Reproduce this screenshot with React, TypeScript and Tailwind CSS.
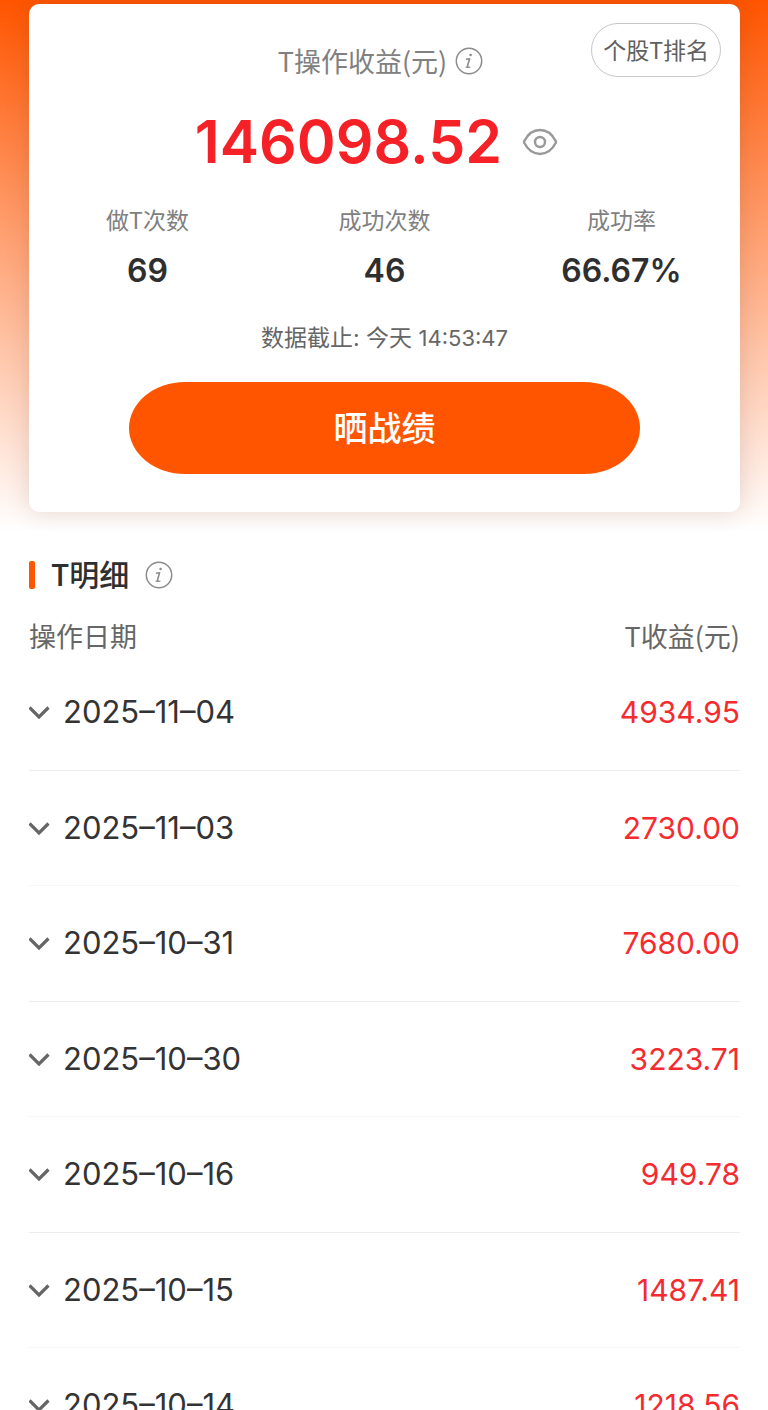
import React from 'react';
import { clsx } from 'clsx';

interface InfoButtonProps {
  label: string;
}

interface StatProps {
  label: string;
  value: string;
}

interface RecordRowProps {
  date: string;
  profit: string;
}

const stats: StatProps[] = [
  { label: '做T次数', value: '69' },
  { label: '成功次数', value: '46' },
  { label: '成功率', value: '66.67%' },
];

const records: RecordRowProps[] = [
  { date: '2025–11–04', profit: '4934.95' },
  { date: '2025–11–03', profit: '2730.00' },
  { date: '2025–10–31', profit: '7680.00' },
  { date: '2025–10–30', profit: '3223.71' },
  { date: '2025–10–16', profit: '949.78' },
  { date: '2025–10–15', profit: '1487.41' },
  { date: '2025–10–14', profit: '1218.56' },
];

const CJK = "font-['Noto_Sans_CJK_SC',sans-serif]";

const InfoButton = ({ label }: InfoButtonProps) => (
  <button type="button" aria-label={label} className="shrink-0 text-[#8c8c8c]">
    <svg viewBox="0 0 28 28" className="block size-7" fill="none" stroke="currentColor">
      <circle cx="14" cy="14" r="12.7" strokeWidth="1.5" />
      <circle cx="15.6" cy="8" r="1.3" fill="currentColor" stroke="none" />
      <path d="M11 12.2l3.6-.4-2.1 7.2c-.3 1 .2 1.4 1.1 1" strokeWidth="1.6" strokeLinejoin="round" />
      <path d="M10.6 20.2h4.8" strokeWidth="1.2" />
    </svg>
  </button>
);

const EyeIcon = () => (
  <svg viewBox="0 0 36 28" className="block h-7 w-9" fill="none" stroke="currentColor" strokeWidth="2.5">
    <path
      d="M2.2 13.2C5.8 6.2 11.4 2.1 18 2.1s12.2 4.1 15.8 11.1c.3.5.3 1.1 0 1.6C30.2 21.8 24.6 25.9 18 25.9S5.8 21.8 2.2 14.8c-.3-.5-.3-1.1 0-1.6Z"
      strokeLinejoin="round"
    />
    <circle cx="18" cy="14" r="5" />
  </svg>
);

const Chevron = () => (
  <svg viewBox="0 0 22 14" className="block h-[14px] w-[22px] text-[#666]" fill="none" stroke="currentColor">
    <path d="M.5 2.5 10 12l9.500-9.500" strokeWidth="3.2" />
  </svg>
);

const Stat = ({ label, value }: StatProps) => (
  <div className="flex flex-1 flex-col items-center gap-[18px]">
    <dt className="text-[23px] leading-8 text-[#808080]">{label}</dt>
    <dd className="font-[Inter,sans-serif] text-[32px] leading-9 font-semibold text-[#2f2f2f]">{value}</dd>
  </div>
);

const SummaryCard = () => (
  <section className="relative flex flex-col items-center rounded-[10px] bg-white pt-[39px] pb-[38px] shadow-[0_0_24px_rgba(90,40,20,0.16)]">
    <button
      type="button"
      className="absolute top-[19px] right-[19px] h-[54px] rounded-full border border-[#c8c8c8] px-[11px] pb-[2px] text-[23px] text-[#606060]"
    >
      个股T排名
    </button>

    <div className="mr-2 flex items-center gap-2">
      <h1 className="text-[27px] leading-9 text-[#808080]">T操作收益(元)</h1>
      <InfoButton label="T操作收益说明" />
    </div>

    <div className="mt-[29px] mr-4 flex items-center gap-5">
      <strong className="font-[Inter,sans-serif] text-[59px] leading-[68px] font-semibold text-[#f52126]">146098.52</strong>
      <button type="button" aria-label="隐藏金额" className="text-[#999]">
        <EyeIcon />
      </button>
    </div>

    <dl className="mt-[27px] flex w-full">
      {stats.map((stat) => (
        <Stat key={stat.label} {...stat} />
      ))}
    </dl>

    <p className="mt-[33px] font-[Inter,'Noto_Sans_CJK_SC',sans-serif] text-[23px] leading-8 text-[#666]">
      数据截止: 今天 <time className="text-[22px]">14:53:47</time>
    </p>

    <button
      type="button"
      className="mt-7 h-[92px] w-[72%] rounded-[56px/46px] bg-[#ff5500] pb-1 text-[34px] font-medium text-white"
    >
      晒战绩
    </button>
  </section>
);

const RecordRow = ({ date, profit }: RecordRowProps) => (
  <tr className="h-[116px] border-b border-[#ededed] even:h-[115px] even:border-[#f6f6f6]">
    <td className="p-0">
      <button type="button" aria-expanded={false} className="flex items-center gap-3 text-[31px] text-[#333]">
        <Chevron />
        {date}
      </button>
    </td>
    <td className="p-0 text-right text-[30px] text-[#f52b2f]">{profit}</td>
  </tr>
);

export default function App() {
  return (
    <main className={clsx('h-screen overflow-hidden bg-white', CJK)}>
      {/* Summary */}
      <div className="overflow-hidden bg-linear-to-b/srgb from-[#ff5500] to-white pt-1 pr-7 pb-5 pl-[29px]">
        <SummaryCard />
      </div>

      {/* Details */}
      <section className="pr-7 pl-[29px]">
        <div className="flex h-[86px] items-center">
          <span className="mr-4 h-7 w-[6px] rounded-[2px] bg-[#ff5500]" />
          <h2 className="mr-4 pb-1 text-[30px] leading-10 font-medium text-[#2f2f2f]">T明细</h2>
          <InfoButton label="T明细说明" />
        </div>

        <table className="w-full border-collapse">
          <thead>
            <tr className="h-9 text-[27px] leading-9 text-[#666]">
              <th className="p-0 text-left font-normal">操作日期</th>
              <th className="p-0 text-right font-normal">T收益(元)</th>
            </tr>
          </thead>
          <tbody className="font-[Inter,sans-serif] leading-10">
            {records.map((record) => (
              <RecordRow key={record.date} {...record} />
            ))}
          </tbody>
        </table>
      </section>
    </main>
  );
}
